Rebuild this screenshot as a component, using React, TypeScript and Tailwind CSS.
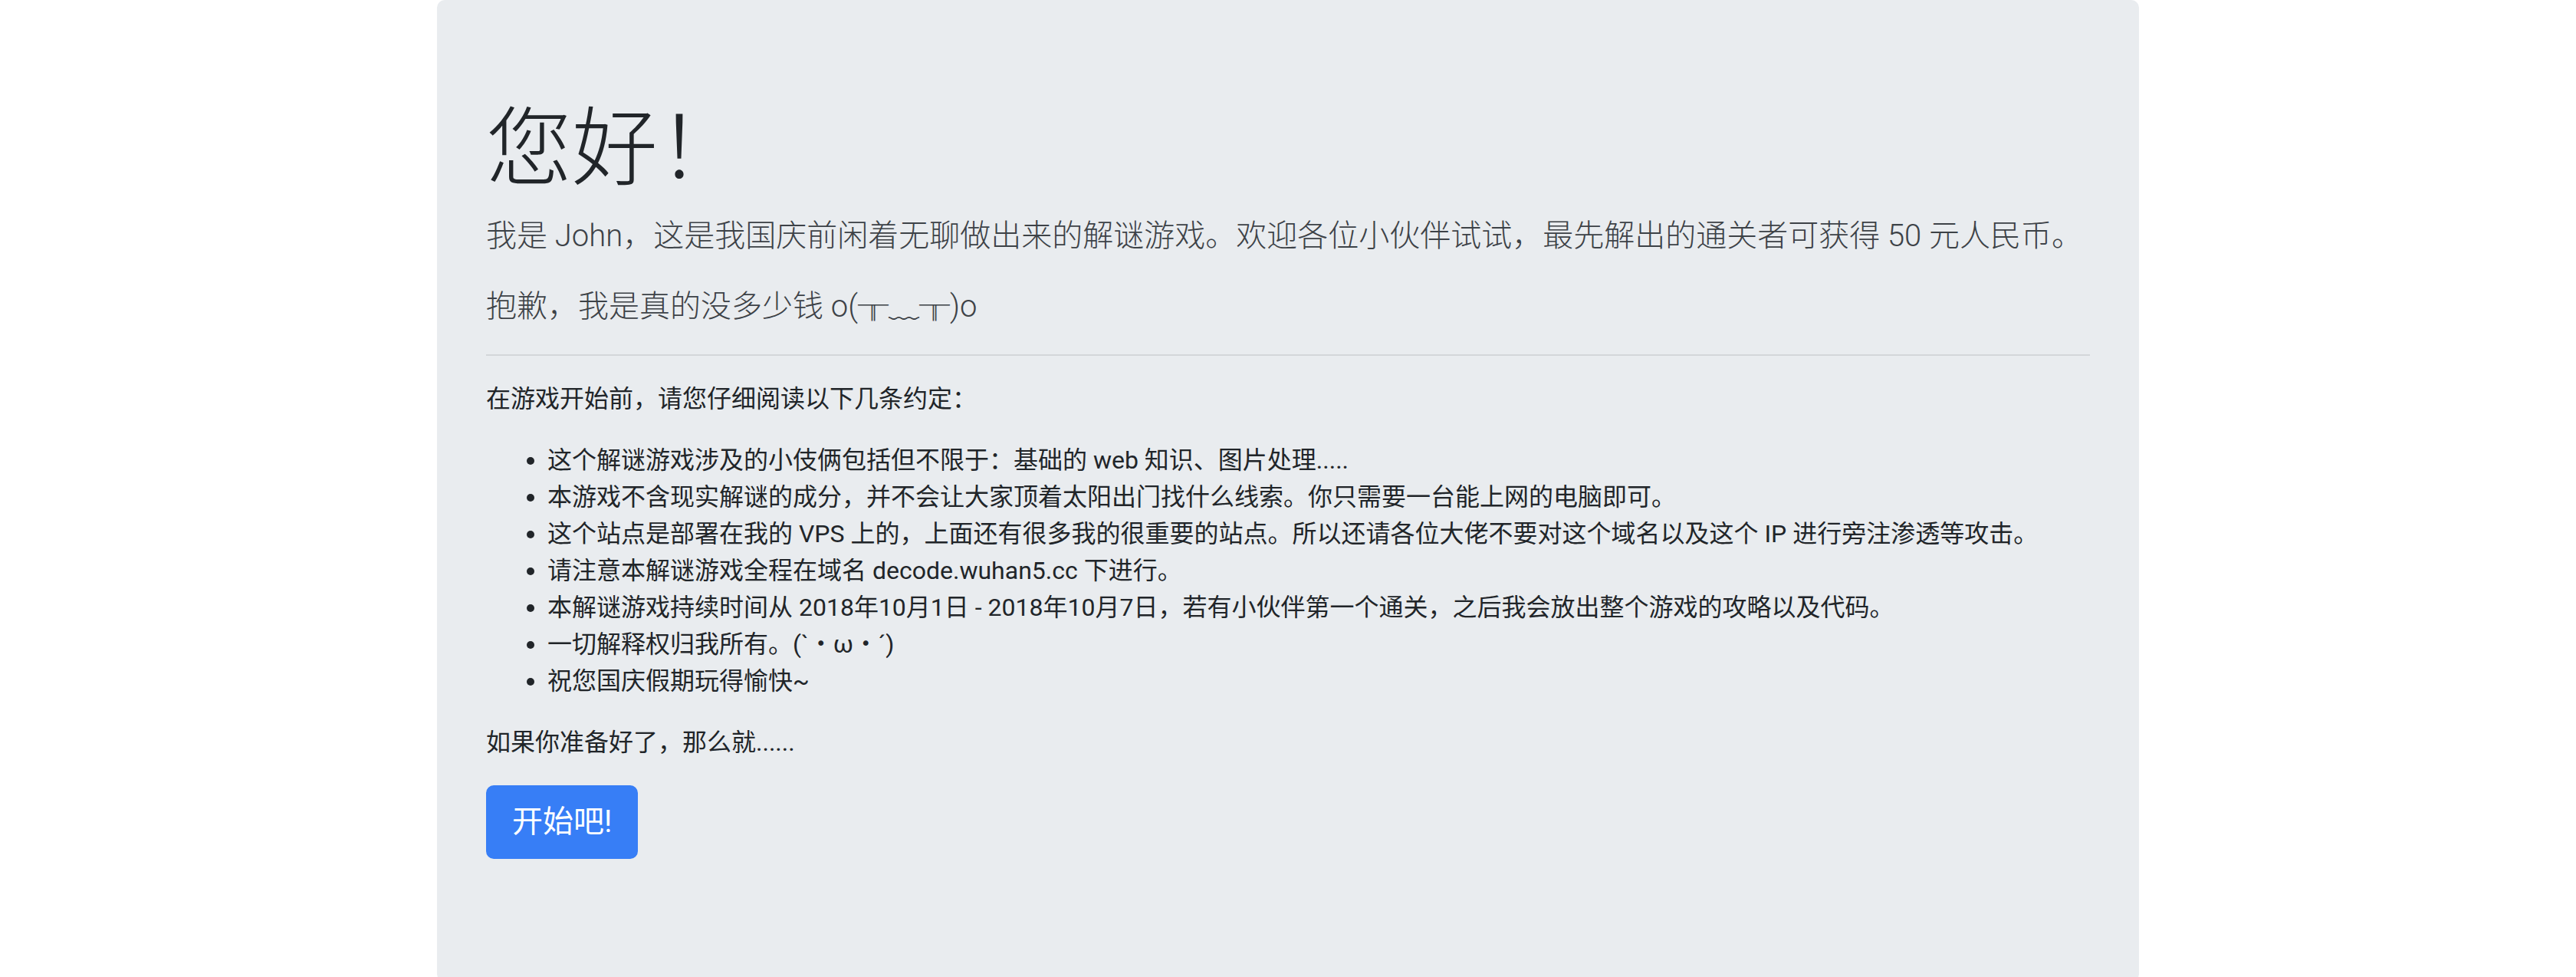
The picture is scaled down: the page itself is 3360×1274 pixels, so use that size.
import React from "react";

const rules = [
  "这个解谜游戏涉及的小伎俩包括但不限于：基础的 web 知识、图片处理.....",
  "本游戏不含现实解谜的成分，并不会让大家顶着太阳出门找什么线索。你只需要一台能上网的电脑即可。",
  "这个站点是部署在我的 VPS 上的，上面还有很多我的很重要的站点。所以还请各位大佬不要对这个域名以及这个 IP 进行旁注渗透等攻击。",
  "请注意本解谜游戏全程在域名 decode.wuhan5.cc 下进行。",
  "本解谜游戏持续时间从 2018年10月1日 - 2018年10月7日，若有小伙伴第一个通关，之后我会放出整个游戏的攻略以及代码。",
  "一切解释权归我所有。(`・ω・´)",
  "祝您国庆假期玩得愉快~",
];

const App: React.FC = () => {
  return (
    <div className="min-h-screen bg-white text-[#212529] font-['Roboto','Noto_Sans_CJK_SC',sans-serif]">
      <div className="w-[2220px] mx-auto">
        <div className="bg-[#e9ecef] rounded-[10px] px-16 pt-32 pb-32">
          <h1 className="text-[112px] leading-[1.2] font-light mb-4">您好！</h1>
          <p className="text-[40px] leading-[1.5] font-light text-[#3d4247] mb-8">
            我是 John，这是我国庆前闲着无聊做出来的解谜游戏。欢迎各位小伙伴试试，最先解出的通关者可获得 50 元人民币。
          </p>
          <p className="text-[40px] leading-[1.5] font-light text-[#3d4247] mb-8">
            抱歉，我是真的没多少钱 o(╥﹏╥)o
          </p>
          <hr className="border-t-2 border-[#d3d6d9] my-8" />
          <p className="text-[32px] leading-[1.5] mb-8">在游戏开始前，请您仔细阅读以下几条约定：</p>
          <ul className="list-disc pl-20 text-[32px] leading-[1.5] mb-8">
            {rules.map((rule) => (
              <li key={rule}>{rule}</li>
            ))}
          </ul>
          <p className="text-[32px] leading-[1.5] mb-8">如果你准备好了，那么就......</p>
          <p className="mb-8">
            <button
              type="button"
              className="bg-[#377ef6] text-white text-[40px] leading-[1.5] px-8 py-4 border-2 border-[#377ef6] rounded-[10px]"
            >
              开始吧!
            </button>
          </p>
        </div>
      </div>
    </div>
  );
};

export default App;
